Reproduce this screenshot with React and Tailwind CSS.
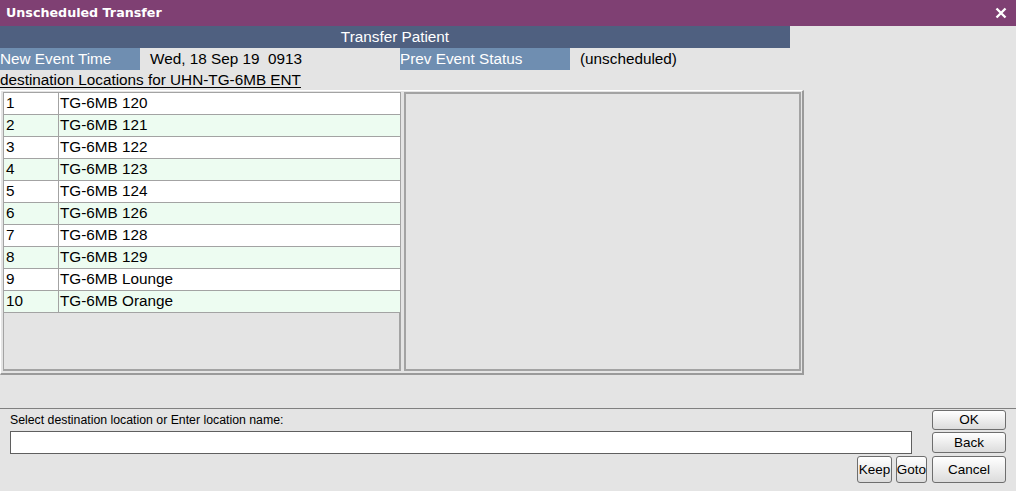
import React from "react";

const locations = [
  "TG-6MB 120",
  "TG-6MB 121",
  "TG-6MB 122",
  "TG-6MB 123",
  "TG-6MB 124",
  "TG-6MB 126",
  "TG-6MB 128",
  "TG-6MB 129",
  "TG-6MB Lounge",
  "TG-6MB Orange",
];

function Button({ label, className }) {
  return (
    <button
      className={
        "rounded-[3px] border border-[#6e6e6e] bg-linear-to-b from-white to-[#dcdcdc] text-[13.5px] text-black leading-none flex items-center justify-center " +
        className
      }
    >
      {label}
    </button>
  );
}

export default function App() {
  return (
    <div className="w-[1016px] h-[491px] bg-[#e4e4e4] flex flex-col font-['Liberation_Sans',Arial,sans-serif] text-[15.3px] text-black overflow-hidden">
      {/* title bar */}
      <div className="h-[26px] bg-[#7f4073] flex items-center justify-between pl-[6px] pr-[9px] text-white">
        <span className="font-['DejaVu_Sans',sans-serif] font-bold text-[12.7px]">
          Unscheduled Transfer
        </span>
        <svg width="12" height="12" viewBox="0 0 12 12">
          <path d="M1.5 1.5 L10.5 10.5 M10.5 1.5 L1.5 10.5" stroke="white" strokeWidth="2.4" />
        </svg>
      </div>

      {/* header */}
      <div className="w-[790px] h-[22px] bg-[#4f6080] text-white flex items-center justify-center">
        Transfer Patient
      </div>

      {/* event row */}
      <div className="h-[22px] flex items-stretch">
        <div className="w-[140px] bg-[#6f8eb1] text-white flex items-center">New Event Time</div>
        <div className="w-[260px] pl-[10px] flex items-center whitespace-pre">Wed, 18 Sep 19  0913</div>
        <div className="w-[170px] bg-[#6f8eb1] text-white flex items-center">Prev Event Status</div>
        <div className="pl-[10px] flex items-center">(unscheduled)</div>
      </div>

      <div className="h-[20px] flex items-center">
        <span className="underline underline-offset-2">destination Locations for UHN-TG-6MB ENT</span>
      </div>

      {/* lists */}
      <div className="w-[804px] h-[285px] border-t border-l border-t-white border-l-white border-r-2 border-b-2 border-r-[#9a9a9a] border-b-[#9a9a9a] flex gap-[3px] pl-[2px] pt-[1px] pb-[2px] pr-[1px]">
        <div className="w-[398px] border border-[#a3a3a3] shadow-[inset_-1px_-1px_0_#a3a3a3] bg-[#e4e4e4]">
          {locations.map((name, i) => (
            <div
              key={i}
              className={
                "h-[22px] flex border-b border-[#a3a3a3] " +
                (i % 2 === 0 ? "bg-white" : "bg-[#edfcf1]")
              }
            >
              <div className="w-[55px] pl-[2px] border-r border-[#a3a3a3] flex items-center">{i + 1}</div>
              <div className="pl-[1px] flex items-center">{name}</div>
            </div>
          ))}
        </div>
        <div className="w-[398px] border-2 border-[#a3a3a3] bg-[#e4e4e4]"></div>
      </div>

      {/* bottom */}
      <div className="mt-[33px] flex-1 border-t border-[#808080] flex pl-[10px] pr-[10px]">
        <div className="flex-1 flex flex-col pr-[5px]">
          <div className="h-[22px] flex items-end text-[12.3px] pb-[2px]">
            Select destination location or Enter location name:
          </div>
          <input
            className="w-[902px] h-[23px] bg-white border border-[#5f5f5f] outline-none"
            readOnly
          />
          <div className="mt-[2px] flex justify-end gap-[4px]">
            <Button label="Keep" className="w-[35px] h-[27px]" />
            <Button label="Goto" className="w-[31px] h-[27px]" />
          </div>
        </div>
        <div className="w-[74px] flex flex-col pt-[1px]">
          <Button label="OK" className="h-[20px]" />
          <Button label="Back" className="h-[21px] mt-[2px]" />
          <Button label="Cancel" className="h-[27px] mt-[3px]" />
        </div>
      </div>
    </div>
  );
}
